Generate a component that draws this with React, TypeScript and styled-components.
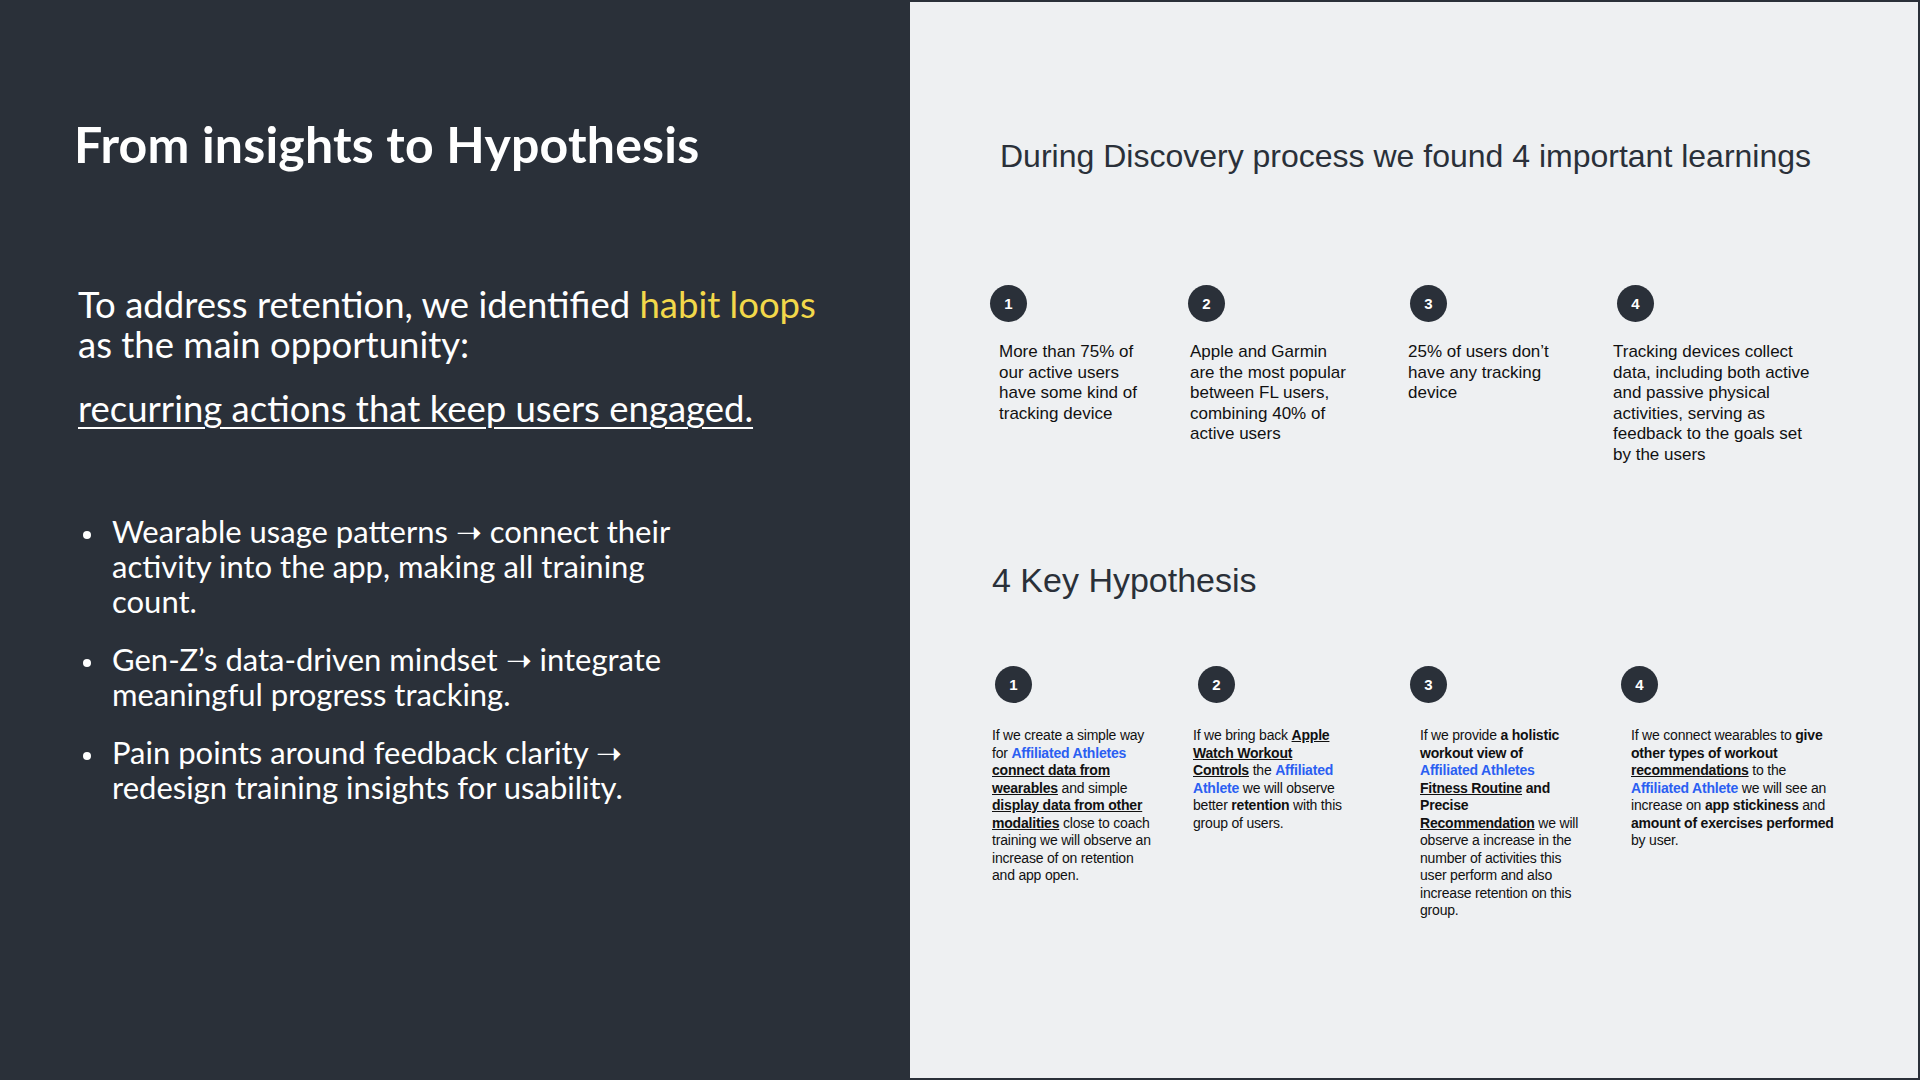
import styled, { createGlobalStyle } from 'styled-components';

const Global = createGlobalStyle`
  html, body { margin: 0; padding: 0; }
  body { width: 1920px; height: 1080px; overflow: hidden; }
`;

const Page = styled.div`
  display: grid;
  grid-template-columns: 910px 1fr;
  width: 1920px;
  height: 1080px;
  background: #2a3039;
`;

const Left = styled.div`
  padding: 114px 0 0 74px;
  color: #fff;
  font-family: Lato, "Open Sans", sans-serif;
`;

const Title = styled.h1`
  margin: 0 0 110px;
  font-size: 50px;
  font-weight: 700;
  letter-spacing: 0.2px;
`;

const Lead = styled.p`
  margin: 0 0 0 4px;
  font-size: 36.5px;
  line-height: 40px;
  font-weight: 400;
  width: 820px;
`;

const Yellow = styled.span`
  color: #f2d84a;
`;

const Underlined = styled.p`
  margin: 22px 0 0 4px;
  font-size: 36.5px;
  text-decoration: underline;
  text-underline-offset: 5px;
  text-decoration-thickness: 2px;
`;

const Bullets = styled.ul`
  margin: 84px 0 0;
  padding: 0 0 0 32px;
  width: 580px;
  display: flex;
  flex-direction: column;
  gap: 23px;
`;

const Bullet = styled.li`
  padding-left: 6px;
  font-size: 31px;
  line-height: 35px;
  &::marker { font-size: 24px; }
`;

const Right = styled.div`
  background: #eef0f2;
  border: 2px solid #2a3039;
  border-left: none;
  padding: 136px 0 0 80px;
  color: #2a3039;
  font-family: "Liberation Sans", Arial, sans-serif;
`;

const Heading = styled.h2<{ $size: number; $indent: number }>`
  margin: 0 0 0 ${p => p.$indent}px;
  font-size: ${p => p.$size}px;
  font-weight: 400;
`;

const Cols = styled.div<{ $cols: string; $top: number }>`
  display: grid;
  grid-template-columns: ${p => p.$cols};
  margin-top: ${p => p.$top}px;
`;

const Col = styled.div``;

const Num = styled.div<{ $shift: number }>`
  width: 37px;
  height: 37px;
  margin-left: ${p => p.$shift}px;
  border-radius: 50%;
  background: #2a3039;
  color: #fff;
  font-size: 15px;
  font-weight: 700;
  display: flex;
  align-items: center;
  justify-content: center;
`;

const Learn = styled.p<{ $shift: number; $w: number }>`
  margin: 20px 0 0 ${p => p.$shift}px;
  font-size: 17px;
  line-height: 20.5px;
  color: #111;
  width: ${p => p.$w}px;
`;

const Hyp = styled.p<{ $shift: number; $w: number }>`
  margin: 24px 0 0 ${p => p.$shift}px;
  font-size: 14px;
  line-height: 17.5px;
  letter-spacing: -0.2px;
  color: #111;
  width: ${p => p.$w}px;
`;

const Blue = styled.b`
  color: #2b5ff2;
  font-weight: 700;
`;
const Strong = styled.b`font-weight: 700;`;
const StrongU = styled.b`font-weight: 700; text-decoration: underline;`;

export default function App() {
  const learnings = [
    'More than 75% of our active users have some kind of tracking device',
    'Apple and Garmin are the most popular between FL users, combining 40% of active users',
    '25% of users don\u2019t have any tracking device',
    'Tracking devices collect data, including both active and passive physical activities, serving as feedback to the goals set by the users',
  ];
  const lShift = [9, 2, -2, -4];
  const lWidth = [150, 166, 150, 210];
  const hyps = [
    <>If we create a simple way for <Blue>Affiliated Athletes</Blue> <StrongU>connect data from wearables</StrongU> and simple <StrongU>display data from other modalities</StrongU> close to coach training we will observe an increase of on retention and app open.</>,
    <>If we bring back <StrongU>Apple Watch Workout Controls</StrongU> the <Blue>Affiliated Athlete</Blue> we will observe better <Strong>retention</Strong> with this group of users.</>,
    <>If we provide <Strong>a holistic workout view of</Strong> <Blue>Affiliated Athletes</Blue> <StrongU>Fitness Routine</StrongU> <Strong>and Precise</Strong> <StrongU>Recommendation</StrongU> we will observe a increase in the number of activities this user perform and also increase retention on this group.</>,
    <>If we connect wearables to <Strong>give other types of workout</Strong> <StrongU>recommendations</StrongU> to the <Blue>Affiliated Athlete</Blue> we will see an increase on <Strong>app stickiness</Strong> and <Strong>amount of exercises performed</Strong> by user.</>,
  ];
  const hShift = [-3, -5, 10, 10];
  const hWidth = [160, 150, 160, 205];
  return (
    <Page>
      <Global />
      <Left>
        <Title>From insights to Hypothesis</Title>
        <Lead>
          To address retention, we identified <Yellow>habit loops</Yellow>
          <br />as the main opportunity:
        </Lead>
        <Underlined>recurring actions that keep users engaged.</Underlined>
        <Bullets>
          <Bullet>Wearable usage patterns &#10141; connect their activity into the app, making all training count.</Bullet>
          <Bullet>Gen-Z&rsquo;s data-driven mindset &#10141; integrate meaningful progress tracking.</Bullet>
          <Bullet>Pain points around feedback clarity &#10141; redesign training insights for usability.</Bullet>
        </Bullets>
      </Left>
      <Right>
        <Heading $size={32} $indent={10}>During Discovery process we found 4 important learnings</Heading>
        <Cols $cols="198px 222px 207px 1fr" $top={110}>
          {learnings.map((t, i) => (
            <Col key={i}>
              <Num $shift={0}>{i + 1}</Num>
              <Learn $shift={lShift[i]} $w={lWidth[i]}>{t}</Learn>
            </Col>
          ))}
        </Cols>
        <Heading $size={34} $indent={2} style={{ marginTop: 96 }}>4 Key Hypothesis</Heading>
        <Cols $cols="203px 212px 211px 1fr" $top={66}>
          {hyps.map((h, i) => (
            <Col key={i}>
              <Num $shift={5}>{i + 1}</Num>
              <Hyp $shift={hShift[i] + 5} $w={hWidth[i]}>{h}</Hyp>
            </Col>
          ))}
        </Cols>
      </Right>
    </Page>
  );
}
